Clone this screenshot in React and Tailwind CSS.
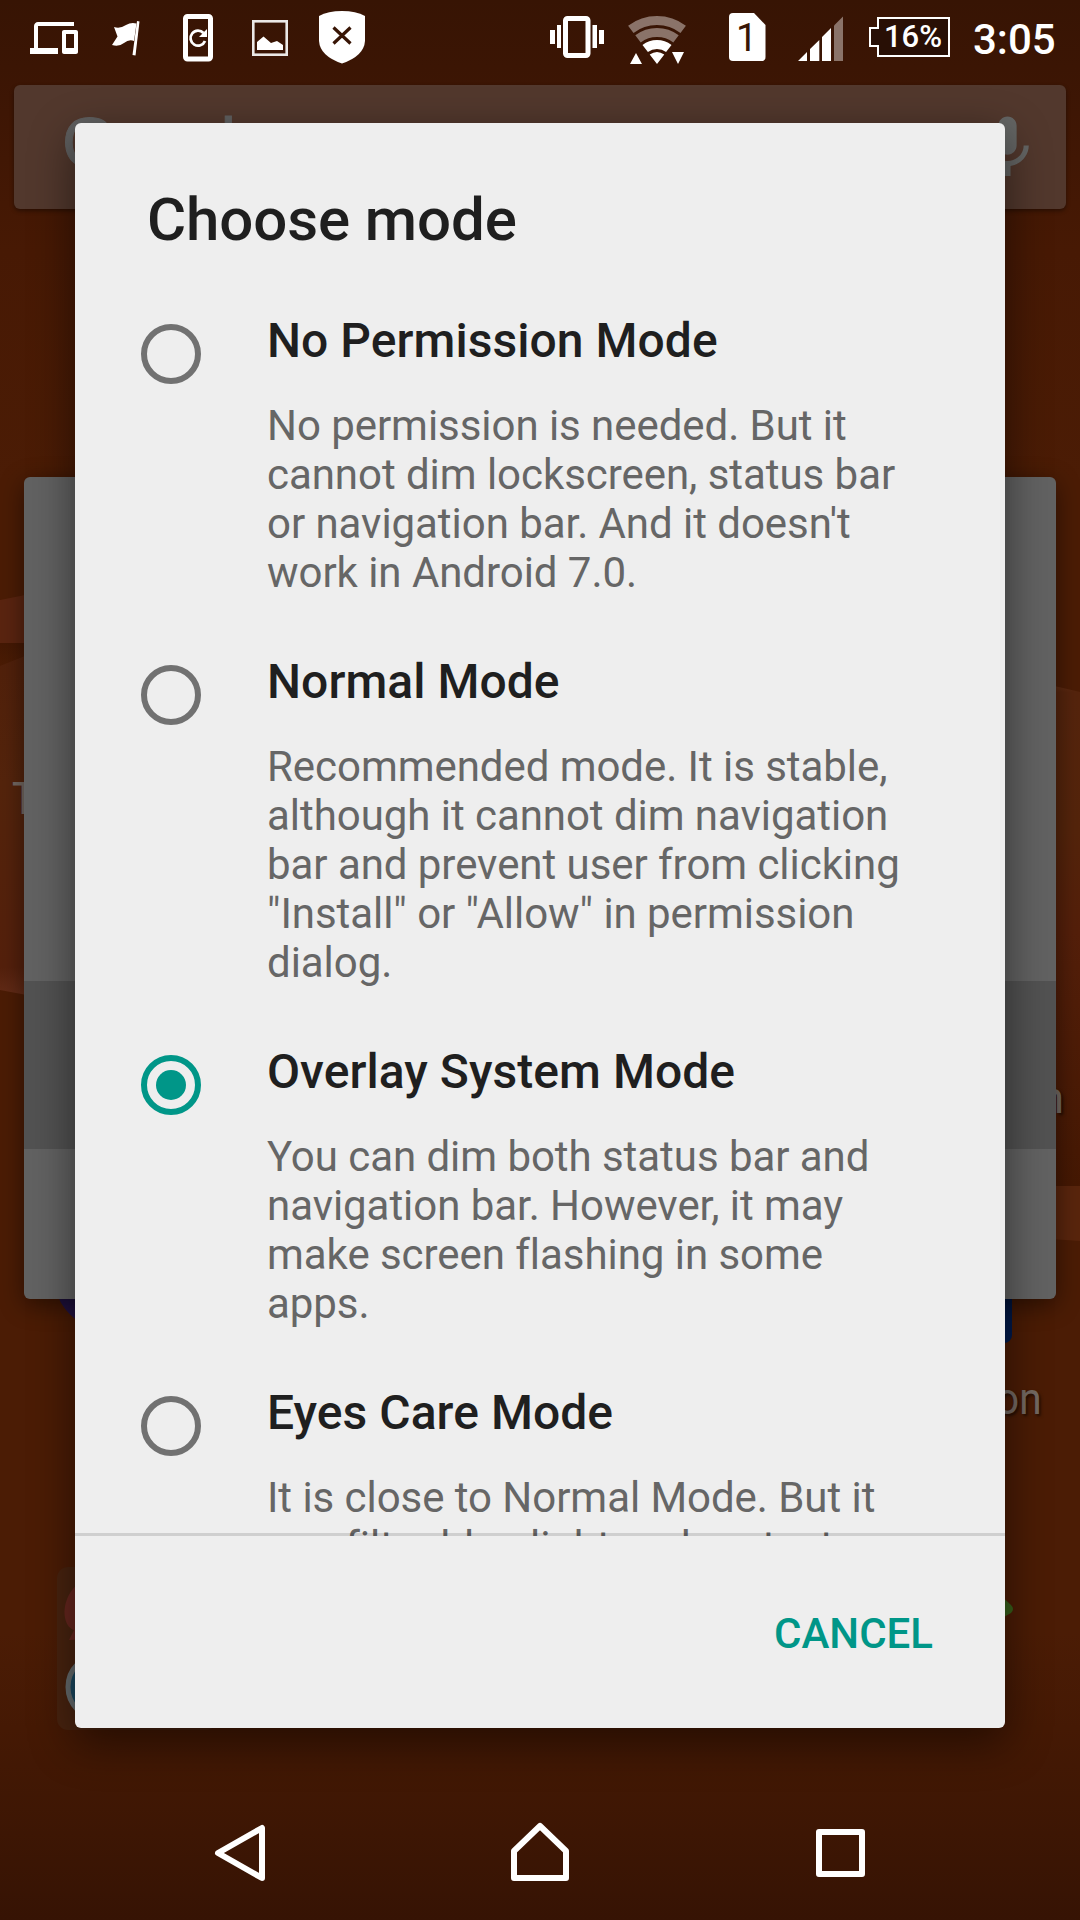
const modes = [
  {
    title: "No Permission Mode",
    lines: ["No permission is needed. But it", "cannot dim lockscreen, status bar", "or navigation bar. And it doesn't", "work in Android 7.0."],
  },
  {
    title: "Normal Mode",
    lines: ["Recommended mode. It is stable,", "although it cannot dim navigation", "bar and prevent user from clicking", "\"Install\" or \"Allow\" in permission", "dialog."],
  },
  {
    title: "Overlay System Mode",
    checked: true,
    lines: ["You can dim both status bar and", "navigation bar. However, it may", "make screen flashing in some", "apps."],
  },
  {
    title: "Eyes Care Mode",
    lines: ["It is close to Normal Mode. But it", "can filter blue light and protect"],
  },
];

function Wallpaper() {
  return (
    <svg className="absolute inset-0" width="1080" height="1920" viewBox="0 0 1080 1920">
      <defs>
        <linearGradient id="base" x1="0" y1="0" x2="0" y2="1">
          <stop offset="0" stopColor="#371404" />
          <stop offset="0.035" stopColor="#3b1504" />
          <stop offset="0.13" stopColor="#471904" />
          <stop offset="0.25" stopColor="#4b1c05" />
          <stop offset="0.85" stopColor="#4b1c05" />
          <stop offset="0.9" stopColor="#451904" />
          <stop offset="0.955" stopColor="#3d1604" />
          <stop offset="1" stopColor="#361304" />
        </linearGradient>
        <linearGradient id="petal" x1="0" y1="0" x2="0" y2="1">
          <stop offset="0" stopColor="#50200b" />
          <stop offset="0.4" stopColor="#54240c" />
          <stop offset="0.9" stopColor="#54200c" />
          <stop offset="1" stopColor="#672f1b" />
        </linearGradient>
        <linearGradient id="fold" x1="0" y1="0" x2="0" y2="1">
          <stop offset="0" stopColor="#431804" />
          <stop offset="1" stopColor="#4b1c05" />
        </linearGradient>
        <linearGradient id="petalRight" x1="0" y1="0" x2="0" y2="1">
          <stop offset="0" stopColor="#6a341a" />
          <stop offset="0.03" stopColor="#55240d" />
          <stop offset="0.3" stopColor="#54240b" />
          <stop offset="0.5" stopColor="#541f0a" />
          <stop offset="1" stopColor="#451803" />
        </linearGradient>
      </defs>
      <rect width="1080" height="1920" fill="url(#base)" />
      <path d="M0 600L75 585V643H0Z" fill="#5a2410" />
      <path d="M0 643H75V640L0 666Z" fill="url(#fold)" />
      <path d="M0 666L75 636V1004L0 990Z" fill="url(#petal)" />
      <path d="M1005 677Q1040 682 1080 692V1186H1005Z" fill="url(#petalRight)" />
      <path d="M1005 1186H1080V1241L1005 1236Z" fill="#59250d" />
      <circle cx="108" cy="1276" r="54" fill="#26154a" />
      <rect x="900" y="1220" width="112" height="123" rx="8" fill="#001a4c" />
      <rect x="57" y="1567" width="160" height="163" rx="11" fill="#48230f" />
      <path d="M100 1575C60 1580 58 1625 74 1630L69 1640Q92 1640 110 1625Z" fill="#66261e" />
      <circle cx="100" cy="1687" r="32" fill="#1a4860" stroke="#666c6e" strokeWidth="5" />
      <path d="M995 1590L1011 1605Q1015 1609 1011 1613L995 1622Z" fill="#38601a" />
    </svg>
  );
}

function StatusBar() {
  return (
    <header className="relative h-[75px] w-full text-white">
      <svg className="absolute inset-0" width="1080" height="75" viewBox="0 0 1080 75" fill="#fff">
        <path transform="translate(30 14) scale(2)" d="M4 6h18V4H4c-1.1 0-2 .9-2 2v11H0v3h14v-3H4V6zm19 2h-6c-.55 0-1 .45-1 1v10c0 .55.45 1 1 1h6c.55 0 1-.45 1-1V9c0-.55-.45-1-1-1zm-1 9h-4v-7h4v7z" />
        <path d="M114 27Q120 29 126 25Q131 22 136.500 23.500L134 41Q129 39 124 43Q119 47 112 45L117.500 36.500Z" />
        <path d="M137 21L139.500 21.500L135.500 55.500L132.500 55Z" />
        <rect x="185.500" y="16.500" width="25" height="42.500" rx="2" fill="none" stroke="#fff" strokeWidth="5" />
        <path d="M203.500 33A7.500 7.500 0 1 0 205 41" fill="none" stroke="#fff" strokeWidth="2.8" />
        <path d="M207 29V37H199Z" />
        <rect x="253.300" y="21.300" width="33.400" height="33.400" fill="none" stroke="#fff" strokeOpacity=".9" strokeWidth="2.6" />
        <path d="M257 50V42L263.500 36.500L271 43L277 41L283 45V50Z" />
        <path d="M342 11Q356 11 365 16V41Q364 56 342 63.500Q320 56 319 41V16Q328 11 342 11Z" />
        <path d="M333.500 27.500L350.500 43.500M350.500 27.500L333.500 43.500" stroke="#381505" strokeWidth="3.2" />
        <rect x="565.500" y="18.500" width="22.500" height="37" rx="2" fill="none" stroke="#fff" strokeWidth="5" />
        <path d="M550 30h5v14h-5zM557 25h4v23h-4zM592.500 25h4.500v23h-4.500zM599 30h5v14h-5z" />
        <g fill="none" stroke="#fff">
          <path d="M630.800 29.300A43.500 43.500 0 0 1 683.200 29.300" strokeWidth="9" stroke="#8a7369" />
          <path d="M638 38.900A31.500 31.500 0 0 1 676 38.900" strokeWidth="9" stroke="#8a7369" />
          <path d="M645.200 48.500A19.500 19.500 0 0 1 668.800 48.500" strokeWidth="9" />
        </g>
        <path d="M657 64L649.700 54.500Q657 49.500 664.300 54.500ZM630 64L636 53L642 64ZM672 52H684L678 64Z" />
        <path d="M733 13H754L765.500 25V57Q765.500 61 761.500 61H733Q729 61 729 57V17Q729 13 733 13Z" />
        <path d="M798 61L807 52V61ZM810 61V49L819.300 40V61ZM822 61V37L831 28V61Z" />
        <path d="M834 61V25.500L843 16.500V61Z" fill="#8a7369" />
        <path d="M878 18H949V56H878V46H870V28H878Z" fill="#280f05" stroke="#fff" strokeWidth="2" />
      </svg>
      <span className="absolute left-[736px] top-[17px] text-[38px] leading-[42px] font-normal text-[#381505]">1</span>
      <span className="absolute left-[884px] top-[19px] text-[31px] leading-[36px] font-medium">16%</span>
      <span className="absolute left-[973px] top-[15px] text-[42px] leading-[49px] font-medium">3:05</span>
    </header>
  );
}

/* Launcher and the settings card that stay dimmed behind the dialog */
function Backdrop() {
  return (
    <div className="absolute inset-0 overflow-hidden">
      <Wallpaper />
      <span className="absolute left-[12px] top-[773px] origin-left scale-x-85 text-[45px] leading-[52px] text-[#746962]">T</span>
      <span className="absolute right-[16px] top-[1072px] text-[45px] leading-[52px] text-[#746962] [text-shadow:2px_2px_3px_#0008]">n</span>
      <span className="absolute right-[38px] top-[1373px] origin-right scale-x-90 text-[45px] leading-[52px] text-[#746962] [text-shadow:2px_2px_3px_#0008]">on</span>
      <div className="absolute left-[14px] top-[85px] h-[124px] w-[1052px] rounded-md bg-[#52382d] shadow-[0_2px_4px_#0006]">
        <span className="absolute left-[48px] top-[18px] font-['Liberation_Sans'] text-[70px] leading-[80px] tracking-[-3.2px] text-[#616161] [-webkit-text-stroke:1px_#616161]">Google</span>
        <svg className="absolute left-[957px] top-[24px]" width="73" height="73" viewBox="0 0 24 24" fill="#656665">
          <path d="M12 15c1.660 0 3-1.340 3-3V5.500c0-1.660-1.340-3-3-3s-3 1.340-3 3V12c0 1.660 1.340 3 3 3zm5.300-3c0 3-2.540 5.100-5.300 5.100S6.700 15 6.700 12H5c0 3.410 2.720 6.230 6 6.720V22h2v-3.280c3.280-.49 6-3.310 6-6.720h-1.700z" />
        </svg>
      </div>
      <div className="absolute left-[24px] top-[477px] flex h-[822px] w-[1032px] flex-col overflow-hidden rounded-md bg-[#626262] shadow-[0_6px_24px_#0007]">
        <div className="mt-[504px] h-[168px] bg-[#525252]" />
      </div>
    </div>
  );
}

function Radio({ checked }) {
  return (
    <span className={checked ? "mt-[11px] flex size-[60px] shrink-0 items-center justify-center rounded-full border-[6px] border-[#009688]" : "mt-[11px] flex size-[60px] shrink-0 items-center justify-center rounded-full border-[6px] border-[#717171]"}>
      {checked && <span className="size-[30px] rounded-full bg-[#009688]" />}
    </span>
  );
}

function Dialog() {
  return (
    <section className="relative mx-auto mt-12 flex h-[1605px] w-[930px] flex-col overflow-hidden rounded-md bg-[#eee] shadow-[0_14px_44px_2px_#0007]">
      <h1 className="pl-[72px] pt-[62px] text-[60px] leading-[70px] tracking-[-0.1px] font-medium text-[#1f1f1f]">Choose mode</h1>
      <div className="flex h-[1281px] shrink-0 flex-col gap-[57px] overflow-hidden pt-[58px] pl-[66px]">
        {modes.map((m) => (
          <div key={m.title} className="flex shrink-0 items-start gap-[66px]">
            <Radio checked={m.checked} />
            <div className="whitespace-nowrap">
              <h2 className="text-[48px] leading-[56px] tracking-[0.05px] font-medium text-[#1f1f1f]">{m.title}</h2>
              <p className="mt-8 text-[42px] leading-[49px] tracking-[-0.05px] text-[#666]">
                {m.lines.map((l) => (
                  <span key={l} className="block">{l}</span>
                ))}
              </p>
            </div>
          </div>
        ))}
      </div>
      <div className="relative -mt-[3px] h-[3px] shrink-0 bg-black/13" />
      <div className="flex grow items-center justify-end pt-[2px] pr-[72px]">
        <button className="text-[42px] leading-[49px] font-medium text-[#009688]">CANCEL</button>
      </div>
    </section>
  );
}

function NavBar() {
  return (
    <nav className="flex h-[144px] items-center justify-center gap-[228px] pt-[10px]">
      <svg width="72" height="72" viewBox="0 0 72 72" fill="none" stroke="#fff" strokeWidth="6" strokeLinejoin="round">
        <path d="M58 11V61L14 36Z" />
      </svg>
      <svg width="72" height="72" viewBox="0 0 72 72" fill="none" stroke="#fff" strokeWidth="6" strokeLinejoin="round">
        <path d="M36 9L62 34V61H10V34Z" />
      </svg>
      <svg width="72" height="72" viewBox="0 0 72 72" fill="none" stroke="#fff" strokeWidth="6" strokeLinejoin="round">
        <path d="M15 15H58V57H15Z" />
      </svg>
    </nav>
  );
}

export default function App() {
  return (
    <div className="relative flex h-[1920px] w-[1080px] flex-col overflow-hidden font-[Roboto,sans-serif]">
      <Backdrop />
      <StatusBar />
      <Dialog />
      <div className="relative mt-auto">
        <NavBar />
      </div>
    </div>
  );
}
